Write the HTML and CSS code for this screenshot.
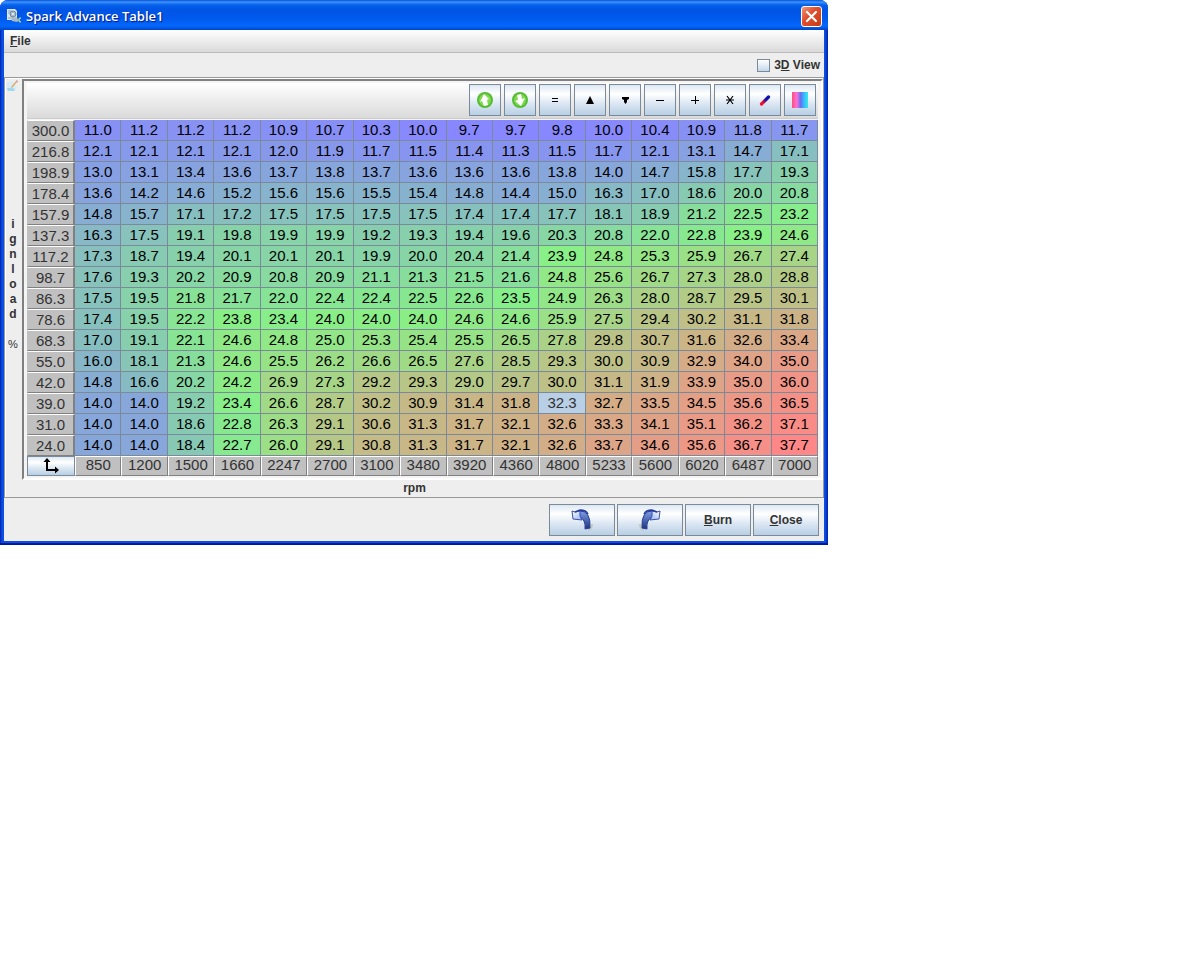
FILE: index.html
```
<!DOCTYPE html>
<html lang="en">
<head>
    <meta charset="UTF-8">
    <meta name="viewport" content="width=device-width, initial-scale=1.0">
    <title>Spark Advance Table1</title>
    <link rel="stylesheet" href="styles.css">
</head>
<body>
    <div class="window">
        <!-- Title bar -->
        <header class="title-bar">
            <svg class="title-icon" width="16" height="16" viewBox="0 0 16 16">
                <path d="M1 1h8l2 2v9H1z" fill="#dce6ee"/>
                <path d="M2 3h4M2 5h2M2 10h6" stroke="#8aa4bb"/>
                <circle cx="7" cy="6" r="3" fill="#a9bccb" stroke="#6f8798"/>
                <circle cx="7" cy="6" r="1" fill="#eef4f8"/>
                <path d="M5 11l5-2 3 3-2 2-5-1z" fill="#a8b8c4"/>
                <path d="M15 10a2 2 0 1 0 0 4" fill="none" stroke="#9fd0a0" stroke-width="1.5"/>
            </svg>
            <h1>Spark Advance Table1</h1>
            <button type="button" class="close-x" aria-label="Close window">
                <svg width="13" height="13" viewBox="0 0 13 13">
                    <path d="M2 2l9 9M11 2l-9 9" stroke="#fff" stroke-width="2.2" stroke-linecap="round"/>
                </svg>
            </button>
        </header>

        <nav class="menu-bar">
            <button type="button" class="menu-item"><u>F</u>ile</button>
        </nav>

        <div class="view-row">
            <input type="checkbox" id="view-3d">
            <label for="view-3d">3<u>D</u> View</label>
        </div>

        <!-- Table panel -->
        <main class="panel">
            <div class="y-axis">
                <svg class="edit-icon" width="12" height="12" viewBox="0 0 12 12">
                    <path d="M0 3l7-2 4 6-2 4H2z" fill="#d9edf6"/>
                    <path d="M1 8q4-1 8 1l-1 2H2z" fill="#a5d8ee"/>
                    <path d="M5 7l5-6 1 1-5 6z" fill="#e5a765"/>
                    <path d="M10 0l2 1-1 2z" fill="#c98c80"/>
                </svg>
                <div class="y-label">
                    <span>i</span><span>g</span><span>n</span><span>l</span><span>o</span><span>a</span><span>d</span><span></span><span class="unit">%</span>
                </div>
            </div>

            <div class="editor">
                <div class="frame">
                    <div class="toolbar">
                        <button type="button" class="tool" aria-label="Increase all">
                            <svg width="18" height="18" viewBox="0 0 18 18">
                                <circle cx="9" cy="9" r="8" fill="#55bd35"/>
                                <circle cx="9" cy="9" r="6" fill="#7fd94e"/>
                                <path d="M8 3l5 5-2 1 1 5-4 1-2-5-2 1z" fill="#fff"/>
                            </svg>
                        </button>
                        <button type="button" class="tool" aria-label="Decrease all">
                            <svg width="18" height="18" viewBox="0 0 18 18">
                                <circle cx="9" cy="9" r="8" fill="#55bd35"/>
                                <circle cx="9" cy="9" r="6" fill="#7fd94e"/>
                                <path d="M6 4l4-1 1 5 3-1-4 8-6-5 3-1z" fill="#fff"/>
                            </svg>
                        </button>
                        <button type="button" class="tool" aria-label="Set equal">
                            <svg width="12" height="12" viewBox="0 0 12 12" shape-rendering="crispEdges">
                                <path d="M3 4h6v1H3zM3 7h6v1H3z"/>
                            </svg>
                        </button>
                        <button type="button" class="tool" aria-label="Increment">
                            <svg width="12" height="12" viewBox="0 0 12 12"><path d="M6 2l4 8H2z"/></svg>
                        </button>
                        <button type="button" class="tool" aria-label="Decrement">
                            <svg width="12" height="12" viewBox="0 0 12 12"><path d="M3 3h7v2L8 6v2L6.500 10 5 8V6L3 5z"/></svg>
                        </button>
                        <button type="button" class="tool" aria-label="Subtract">
                            <svg width="12" height="12" viewBox="0 0 12 12" shape-rendering="crispEdges"><path d="M2 6h8v1H2z"/></svg>
                        </button>
                        <button type="button" class="tool" aria-label="Add">
                            <svg width="12" height="12" viewBox="0 0 12 12" shape-rendering="crispEdges"><path d="M2 6h8v1H2zM6 2h1v8H6z"/></svg>
                        </button>
                        <button type="button" class="tool" aria-label="Multiply">
                            <svg width="12" height="12" viewBox="0 0 12 12">
                                <path d="M2 6h8M3 2l6 8M9 2l-6 8" stroke="#000" stroke-width="1.2"/>
                            </svg>
                        </button>
                        <button type="button" class="tool" aria-label="Interpolate">
                            <svg width="14" height="14" viewBox="0 0 14 14">
                                <defs>
                                    <linearGradient id="pen" x1="0" y1="1" x2="1" y2="0">
                                        <stop offset="0.2" stop-color="#f0102c"/>
                                        <stop offset="0.65" stop-color="#1010b0"/>
                                    </linearGradient>
                                </defs>
                                <path d="M3.500 11L10.500 4" stroke="url(#pen)" stroke-width="3.200" stroke-linecap="round"/>
                            </svg>
                        </button>
                        <button type="button" class="tool" aria-label="Colour shading">
                            <span class="swatch"></span>
                        </button>
                    </div>

                    <table class="map" aria-label="Spark advance">
                        <tbody id="map-body"></tbody>
                        <tfoot>
                            <tr id="map-axis">
                                <td class="corner">
                                    <button type="button" aria-label="Edit axes">
                                        <svg width="18" height="16" viewBox="0 0 18 16">
                                            <path d="M5 3v9h9" fill="none" stroke="#000" stroke-width="2"/>
                                            <path d="M5 0l3.500 4h-7zM17 12l-4 3.500v-7z"/>
                                        </svg>
                                    </button>
                                </td>
                            </tr>
                        </tfoot>
                    </table>
                </div>
                <div class="x-label">rpm</div>
            </div>
        </main>

        <!-- Bottom buttons -->
        <footer class="actions">
            <button type="button" class="action" aria-label="Undo">
                <svg width="24" height="24" viewBox="0 0 24 24">
                    <defs>
                        <linearGradient id="head" x1="0" y1="0" x2="1" y2="1">
                            <stop offset="0" stop-color="#fff"/>
                            <stop offset="1" stop-color="#8eb0f0"/>
                        </linearGradient>
                        <linearGradient id="tail" x1="0" y1="0" x2="0" y2="1">
                            <stop offset="0" stop-color="#7f9fe8"/>
                            <stop offset="1" stop-color="#1c3478"/>
                        </linearGradient>
                    </defs>
                    <path d="M18 22q4-1 4-6" fill="none" stroke="#c3c8c0" stroke-width="2"/>
                    <path d="M9 3q12-1 11 17l-5 1q1-10-6-12z" fill="url(#tail)" stroke="#2a3f9c"/>
                    <path d="M2 3l3 1 5-1v5l2 4-9-1z" fill="url(#head)" stroke="#3a50ac"/>
                    <path d="M5 4l5-2q6 0 8 4" fill="none" stroke="#223a9c" stroke-width="1.500"/>
                </svg>
            </button>
            <button type="button" class="action" aria-label="Redo">
                <svg class="mirror" width="24" height="24" viewBox="0 0 24 24">
                    <path d="M18 22q4-1 4-6" fill="none" stroke="#c3c8c0" stroke-width="2"/>
                    <path d="M9 3q12-1 11 17l-5 1q1-10-6-12z" fill="url(#tail)" stroke="#2a3f9c"/>
                    <path d="M2 3l3 1 5-1v5l2 4-9-1z" fill="url(#head)" stroke="#3a50ac"/>
                    <path d="M5 4l5-2q6 0 8 4" fill="none" stroke="#223a9c" stroke-width="1.500"/>
                </svg>
            </button>
            <button type="button" class="action"><u>B</u>urn</button>
            <button type="button" class="action"><u>C</u>lose</button>
        </footer>
    </div>

    <script src="table.js"></script>
</body>
</html>
```
FILE: styles.css
```
* {
    box-sizing: border-box;
}
body {
    margin: 0;
    background: #fff;
    color: #333;
    font-family: "Liberation Sans", Arial, sans-serif;
    font-size: 12px;
    font-weight: bold;
}
button {
    font: inherit;
    color: inherit;
    padding: 0;
}
svg {
    display: block;
}
.window {
    width: 69%;
    min-width: 760px;
    padding: 0 4px 2px;
    background: linear-gradient(to right, #0020a8, #0a4ee4 2px, #0a4ee4 calc(100% - 3px), #0020a8);
    border-bottom: 2px solid #001a98;
    border-radius: 8px 8px 0 0;
}

/* Title bar */
.title-bar {
    display: flex;
    align-items: center;
    gap: 4px;
    height: 30px;
    margin: 0 -4px;
    padding: 2px 6px 0;
    background: linear-gradient(#0a50d8, #3c94ff 2px, #0560ea 5px, #0054e3 10px, #0058ee 18px, #0468fc 26px, #0044c8);
    border-radius: 8px 8px 0 0;
}
.title-bar h1 {
    flex: 1;
    margin: 0;
    color: #fff;
    font-family: "Open Sans", "Noto Sans", sans-serif;
    font-size: 13px;
    font-weight: 600;
    line-height: 20px;
    text-shadow: 1px 1px 1px #0a1883;
}
.close-x {
    display: flex;
    align-items: center;
    justify-content: center;
    width: 21px;
    height: 21px;
    border: 1px solid #fff;
    border-radius: 3px;
    background: linear-gradient(135deg, #f09878, #e05030 40%, #c83a14);
}

/* Menu and view rows */
.menu-bar {
    display: flex;
    align-items: center;
    height: 23px;
    padding-left: 6px;
    background: linear-gradient(#fff, #dadada);
    border-bottom: 1px solid #bbb;
}
.menu-item {
    border: none;
    background: none;
}
.view-row {
    display: flex;
    align-items: center;
    justify-content: flex-end;
    gap: 4px;
    height: 24px;
    padding-right: 4px;
    background: #eee;
}
.view-row input {
    appearance: none;
    width: 13px;
    height: 13px;
    margin: 0;
    border: 1px solid #7a8a99;
    background: linear-gradient(#fff, #c4d8ea);
}

/* Panel */
.panel {
    display: flex;
    background: #eee;
    border: 1px solid #999;
    box-shadow: inset 1px 1px #fff;
}
.y-axis {
    display: flex;
    flex-direction: column;
    width: 17px;
    padding: 2px 2px 0 1px;
}
.y-label {
    display: flex;
    flex: 1;
    flex-direction: column;
    align-items: center;
    justify-content: center;
    padding-bottom: 20px;
}
.y-label span {
    height: 15px;
    line-height: 15px;
}
.y-label .unit {
    font-size: 11px;
    font-weight: normal;
}
.editor {
    flex: 1;
    padding-top: 1px;
}
.frame {
    padding: 2px 3px 2px;
    background: #f4f4f4;
    border: 2px solid #808080;
    border-right-color: #fff;
    border-bottom-color: #fff;
}
.toolbar {
    display: flex;
    justify-content: flex-end;
    gap: 3px;
    height: 36px;
    padding: 1px 2px;
    background: linear-gradient(#fff, #dadada);
    border-bottom: 1px solid #ccc;
}
.tool,
.action,
.corner button {
    display: flex;
    align-items: center;
    justify-content: center;
    border: 1px solid #7a8a99;
    background: linear-gradient(#dde8f3, #fff 30%, #dde8f3 60%, #b8cfe5);
}
.tool {
    width: 32px;
    height: 32px;
}
.swatch {
    width: 16px;
    height: 16px;
    background: linear-gradient(to right, #ff5078, #ff70d8 30%, #6070f0 55%, #40a8ff 70%, #30f0e8);
}

/* Map */
.map {
    width: 100%;
    margin-top: 1px;
    table-layout: fixed;
    border-collapse: separate;
    border-spacing: 0;
    font-size: 15px;
    font-weight: normal;
    line-height: 20px;
    text-align: center;
}
.map th,
.map td {
    height: 21px;
    padding: 0;
    font-weight: normal;
}
.map td {
    color: #000;
    border-right: 1px solid #7a8a99;
    border-bottom: 1px solid #7a8a99;
}
.map th {
    background: #c0c0c0;
    border: 1px solid #808080;
    border-top-color: #fff;
    border-left-color: #fff;
    line-height: 18px;
}
.map tbody th {
    width: 48px;
    padding-bottom: 1px;
    line-height: 17px;
    border-right-width: 2px;
    border-left-color: #c0c0c0;
}
.map tfoot th {
    height: 20px;
    padding-bottom: 2px;
    line-height: 16px;
}
.map td.selected {
    color: #333;
    background: #b8cfe5;
}
.map td.corner {
    width: 48px;
    height: 20px;
    border: none;
}
.corner button {
    width: 100%;
    height: 20px;
}
.x-label {
    height: 17px;
    line-height: 17px;
    padding-right: 16px;
    text-align: center;
}

/* Bottom buttons */
.actions {
    display: flex;
    justify-content: flex-end;
    gap: 2px;
    padding: 6px 5px 5px;
    background: #eee;
}
.action {
    width: 66px;
    height: 32px;
}
.mirror {
    transform: scaleX(-1);
}
```
FILE: table.js
```
const rpm = [850, 1200, 1500, 1660, 2247, 2700, 3100, 3480, 3920, 4360, 4800, 5233, 5600, 6020, 6487, 7000];

// load, then the advance for each rpm
const rows = `
300.0 11.0 11.2 11.2 11.2 10.9 10.7 10.3 10.0 9.7 9.7 9.8 10.0 10.4 10.9 11.8 11.7
216.8 12.1 12.1 12.1 12.1 12.0 11.9 11.7 11.5 11.4 11.3 11.5 11.7 12.1 13.1 14.7 17.1
198.9 13.0 13.1 13.4 13.6 13.7 13.8 13.7 13.6 13.6 13.6 13.8 14.0 14.7 15.8 17.7 19.3
178.4 13.6 14.2 14.6 15.2 15.6 15.6 15.5 15.4 14.8 14.4 15.0 16.3 17.0 18.6 20.0 20.8
157.9 14.8 15.7 17.1 17.2 17.5 17.5 17.5 17.5 17.4 17.4 17.7 18.1 18.9 21.2 22.5 23.2
137.3 16.3 17.5 19.1 19.8 19.9 19.9 19.2 19.3 19.4 19.6 20.3 20.8 22.0 22.8 23.9 24.6
117.2 17.3 18.7 19.4 20.1 20.1 20.1 19.9 20.0 20.4 21.4 23.9 24.8 25.3 25.9 26.7 27.4
98.7 17.6 19.3 20.2 20.9 20.8 20.9 21.1 21.3 21.5 21.6 24.8 25.6 26.7 27.3 28.0 28.8
86.3 17.5 19.5 21.8 21.7 22.0 22.4 22.4 22.5 22.6 23.5 24.9 26.3 28.0 28.7 29.5 30.1
78.6 17.4 19.5 22.2 23.8 23.4 24.0 24.0 24.0 24.6 24.6 25.9 27.5 29.4 30.2 31.1 31.8
68.3 17.0 19.1 22.1 24.6 24.8 25.0 25.3 25.4 25.5 26.5 27.8 29.8 30.7 31.6 32.6 33.4
55.0 16.0 18.1 21.3 24.6 25.5 26.2 26.6 26.5 27.6 28.5 29.3 30.0 30.9 32.9 34.0 35.0
42.0 14.8 16.6 20.2 24.2 26.9 27.3 29.2 29.3 29.0 29.7 30.0 31.1 31.9 33.9 35.0 36.0
39.0 14.0 14.0 19.2 23.4 26.6 28.7 30.2 30.9 31.4 31.8 32.3 32.7 33.5 34.5 35.6 36.5
31.0 14.0 14.0 18.6 22.8 26.3 29.1 30.6 31.3 31.7 32.1 32.6 33.3 34.1 35.1 36.2 37.1
24.0 14.0 14.0 18.4 22.7 26.0 29.1 30.8 31.3 31.7 32.1 32.6 33.7 34.6 35.6 36.7 37.7
`.trim().split('\n').map(line => line.split(' '));

const MIN = 9.7;
const MAX = 37.7;

// blue -> green -> red
function cellColor(value) {
    const t = (value - MIN) / (MAX - MIN) * 2 - 1;
    const side = Math.round(135 + 120 * Math.abs(t));
    const green = Math.round(135 + 105 * (1 - Math.abs(t)));
    return t < 0 ? `rgb(135, ${green}, ${side})` : `rgb(${side}, ${green}, 135)`;
}

const body = document.getElementById('map-body');
rows.forEach(([load, ...values], r) => {
    const tr = body.insertRow();
    const th = document.createElement('th');
    th.scope = 'row';
    th.textContent = load;
    tr.appendChild(th);
    values.forEach((value, c) => {
        const td = tr.insertCell();
        td.textContent = value;
        if (r === 13 && c === 10) {
            td.className = 'selected';
        } else {
            td.style.backgroundColor = cellColor(Number(value));
        }
    });
});

const axis = document.getElementById('map-axis');
rpm.forEach(value => {
    const th = document.createElement('th');
    th.scope = 'col';
    th.textContent = value;
    axis.appendChild(th);
});
```
